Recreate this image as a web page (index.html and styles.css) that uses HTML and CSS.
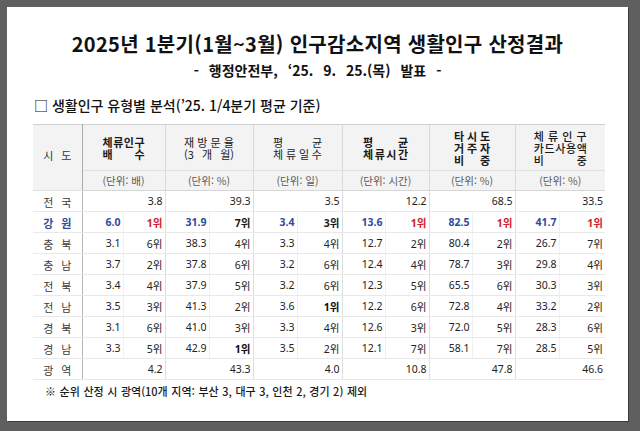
FILE: index.html
```html
<!DOCTYPE html>
<html lang="ko">
<head>
<meta charset="utf-8">
<link rel="stylesheet" href="styles.css">
</head>
<body>
<div class="sheet">
  <h1 class="title">2025년 1분기(1월~3월) 인구감소지역 생활인구 산정결과</h1>
  <p class="sub">- 행정안전부, ‘25. 9. 25.(목) 발표 -</p>
  <p class="sec">□ 생활인구 유형별 분석(’25. 1/4분기 평균 기준)</p>
  <table class="tbl">
    <colgroup>
      <col class="c49">
      <col class="c41"><col class="c42">
      <col class="c44"><col class="c44">
      <col class="c44"><col class="c45">
      <col class="c43"><col class="c44">
      <col class="c43"><col class="c43">
      <col class="c44"><col class="c46">
    </colgroup>
    <thead>
      <tr class="h1">
        <th rowspan="2" class="sdh"><span class="lbl"><i>시</i><i>도</i></span></th>
        <th colspan="2"><div class="hd w1 b"><div class="ln"><i>체</i><i>류</i><i>인</i><i>구</i></div><div class="ln"><i>배</i><i>수</i></div></div></th>
        <th colspan="2"><div class="hd w2"><div class="ln"><i>재</i><i>방</i><i>문</i><i>율</i></div><div class="ln"><i>(3</i><i>개</i><i>월)</i></div></div></th>
        <th colspan="2"><div class="hd w3"><div class="ln"><i>평</i><i>균</i></div><div class="ln"><i>체</i><i>류</i><i>일</i><i>수</i></div></div></th>
        <th colspan="2"><div class="hd w4 b"><div class="ln"><i>평</i><i>균</i></div><div class="ln"><i>체</i><i>류</i><i>시</i><i>간</i></div></div></th>
        <th colspan="2"><div class="hd hd3 w5 b"><div class="ln"><i>타</i><i>시</i><i>도</i></div><div class="ln"><i>거</i><i>주</i><i>자</i></div><div class="ln"><i>비</i><i>중</i></div></div></th>
        <th colspan="2"><div class="hd hd3 w6 m"><div class="ln"><i>체</i><i>류</i><i>인</i><i>구</i></div><div class="ln"><i>카</i><i>드</i><i>사</i><i>용</i><i>액</i></div><div class="ln"><i>비</i><i>중</i></div></div></th>
      </tr>
      <tr class="h2">
        <th colspan="2">(단위: 배)</th>
        <th colspan="2">(단위: %)</th>
        <th colspan="2">(단위: 일)</th>
        <th colspan="2">(단위: 시간)</th>
        <th colspan="2">(단위: %)</th>
        <th colspan="2">(단위: %)</th>
      </tr>
    </thead>
    <tbody>
      <tr>
        <td class="sd"><span class="lbl"><i>전</i><i>국</i></span></td>
        <td colspan="2" class="v">3.8</td><td colspan="2" class="v">39.3</td><td colspan="2" class="v">3.5</td><td colspan="2" class="v">12.2</td><td colspan="2" class="v">68.5</td><td colspan="2" class="v">33.5</td>
      </tr>
      <tr class="gw">
        <td class="sd"><span class="lbl"><i>강</i><i>원</i></span></td>
        <td class="v">6.0</td><td class="r top">1위</td>
        <td class="v">31.9</td><td class="r">7위</td>
        <td class="v">3.4</td><td class="r">3위</td>
        <td class="v">13.6</td><td class="r top">1위</td>
        <td class="v">82.5</td><td class="r top">1위</td>
        <td class="v">41.7</td><td class="r top">1위</td>
      </tr>
      <tr>
        <td class="sd"><span class="lbl"><i>충</i><i>북</i></span></td>
        <td class="v">3.1</td><td class="r">6위</td>
        <td class="v">38.3</td><td class="r">4위</td>
        <td class="v">3.3</td><td class="r">4위</td>
        <td class="v">12.7</td><td class="r">2위</td>
        <td class="v">80.4</td><td class="r">2위</td>
        <td class="v">26.7</td><td class="r">7위</td>
      </tr>
      <tr>
        <td class="sd"><span class="lbl"><i>충</i><i>남</i></span></td>
        <td class="v">3.7</td><td class="r">2위</td>
        <td class="v">37.8</td><td class="r">6위</td>
        <td class="v">3.2</td><td class="r">6위</td>
        <td class="v">12.4</td><td class="r">4위</td>
        <td class="v">78.7</td><td class="r">3위</td>
        <td class="v">29.8</td><td class="r">4위</td>
      </tr>
      <tr>
        <td class="sd"><span class="lbl"><i>전</i><i>북</i></span></td>
        <td class="v">3.4</td><td class="r">4위</td>
        <td class="v">37.9</td><td class="r">5위</td>
        <td class="v">3.2</td><td class="r">6위</td>
        <td class="v">12.3</td><td class="r">5위</td>
        <td class="v">65.5</td><td class="r">6위</td>
        <td class="v">30.3</td><td class="r">3위</td>
      </tr>
      <tr>
        <td class="sd"><span class="lbl"><i>전</i><i>남</i></span></td>
        <td class="v">3.5</td><td class="r">3위</td>
        <td class="v">41.3</td><td class="r">2위</td>
        <td class="v">3.6</td><td class="r first">1위</td>
        <td class="v">12.2</td><td class="r">6위</td>
        <td class="v">72.8</td><td class="r">4위</td>
        <td class="v">33.2</td><td class="r">2위</td>
      </tr>
      <tr>
        <td class="sd"><span class="lbl"><i>경</i><i>북</i></span></td>
        <td class="v">3.1</td><td class="r">6위</td>
        <td class="v">41.0</td><td class="r">3위</td>
        <td class="v">3.3</td><td class="r">4위</td>
        <td class="v">12.6</td><td class="r">3위</td>
        <td class="v">72.0</td><td class="r">5위</td>
        <td class="v">28.3</td><td class="r">6위</td>
      </tr>
      <tr>
        <td class="sd"><span class="lbl"><i>경</i><i>남</i></span></td>
        <td class="v">3.3</td><td class="r">5위</td>
        <td class="v">42.9</td><td class="r first">1위</td>
        <td class="v">3.5</td><td class="r">2위</td>
        <td class="v">12.1</td><td class="r">7위</td>
        <td class="v">58.1</td><td class="r">7위</td>
        <td class="v">28.5</td><td class="r">5위</td>
      </tr>
      <tr>
        <td class="sd"><span class="lbl"><i>광</i><i>역</i></span></td>
        <td colspan="2" class="v">4.2</td><td colspan="2" class="v">43.3</td><td colspan="2" class="v">4.0</td><td colspan="2" class="v">10.8</td><td colspan="2" class="v">47.8</td><td colspan="2" class="v">46.6</td>
      </tr>
    </tbody>
  </table>
  <p class="note">※ 순위 산정 시 광역(10개 지역: 부산 3, 대구 3, 인천 2, 경기 2) 제외</p>
</div>
</body>
</html>
```

FILE: styles.css
```css
html, body {
  margin: 0;
  padding: 0;
}
body {
  background: #5f5f5f;
  padding: 7px 12px 10px 7px;
  font-family: "Noto Sans CJK KR", "Noto Sans", sans-serif;
  color: #1a1a1a;
}
.sheet {
  height: 414px;
  background: #ffffff;
  box-shadow: 1px 1px 0 #3c3c3c;
  overflow: hidden;
  display: flow-root;
}
.title {
  margin: 23px 0 0;
  font-size: 20px;
  line-height: 28px;
  font-weight: 700;
  text-align: center;
  color: #111;
  letter-spacing: 0.3px;
}
.sub {
  margin: 2px 0 0;
  font-size: 14px;
  line-height: 20px;
  font-weight: 700;
  text-align: center;
  word-spacing: 6px;
  color: #111;
}
.sec {
  margin: 15px 0 0 27px;
  font-size: 14px;
  line-height: 20px;
  font-weight: 500;
  color: #111;
}
.tbl {
  margin: 9px 0 0 26px;
  width: 572px;
  table-layout: fixed;
  border-collapse: collapse;
  font-family: "Noto Sans", "Noto Sans CJK KR", sans-serif;
  font-size: 10.5px;
  color: #222;
}
.c49 { width: 49px; }
.c41 { width: 41px; }
.c42 { width: 42px; }
.c43 { width: 43px; }
.c44 { width: 44px; }
.c45 { width: 45px; }
.c46 { width: 46px; }

.tbl th {
  background: #f3f3f3;
  font-weight: 400;
  padding: 0;
  text-align: center;
  vertical-align: middle;
  border-left: 1px solid #d9d9d9;
}
.tbl thead tr.h1 th {
  border-top: 1px solid #cfcfcf;
  height: 45px;
  border-bottom: 1px solid #e0e0e0;
}
.tbl thead tr.h2 th {
  height: 19px;
  color: #5a5a5a;
  font-family: "Noto Sans CJK KR", sans-serif;
  font-size: 10.5px;
  border-bottom: 1px solid #d6d6d6;
}
.tbl th.sdh {
  border-left: none;
  border-right: 1px solid #a9a9a9;
  padding-bottom: 8px;
  font-family: "Noto Sans CJK KR", sans-serif;
  font-size: 11px;
  color: #333;
}
.hd {
  display: inline-flex;
  flex-direction: column;
  vertical-align: middle;
  font-family: "Noto Sans CJK KR", sans-serif;
  font-size: 11px;
  line-height: 12px;
  color: #1a1a1a;
}
.hd3 { line-height: 12px; }
.hd.b { font-weight: 700; }
.hd.m { font-weight: 500; }
.ln {
  display: flex;
  justify-content: space-between;
}
.ln i, .lbl i { font-style: normal; }
.w1 { width: 42px; }
.w2 { width: 50px; }
.w3 { width: 49px; }
.w4 { width: 45px; }
.w5 { width: 36px; }
.w6 { width: 53px; }

.tbl td {
  height: 20px;
  padding: 0 2px 0 0;
  text-align: right;
  vertical-align: middle;
  border-bottom: 1px solid #e9e9e9;
  white-space: nowrap;
}
.tbl td.sd {
  text-align: center;
  padding: 0;
  border-right: 1px solid #b5b5b5;
  font-family: "Noto Sans CJK KR", sans-serif;
  font-size: 11px;
  color: #3a3a3a;
}
.lbl {
  display: inline-flex;
  justify-content: space-between;
  width: 28px;
  vertical-align: middle;
}
.tbl td.v { border-left: 1px solid #dedede; }
.tbl td.r { border-left: 1px solid #f0f0f0; }
.tbl td.first { font-weight: 700; color: #111; }

.gw td { font-weight: 700; color: #2d4c9c; }
.gw td.sd { color: #2d4c9c; font-weight: 700; }
.gw td.r { color: #1a1a1a; }
.gw td.top { color: #d3212d; }

.note {
  margin: 2px 0 0 38px;
  font-size: 11px;
  line-height: 18px;
  font-weight: 500;
  color: #1a1a1a;
  word-spacing: 0.5px;
}
```
